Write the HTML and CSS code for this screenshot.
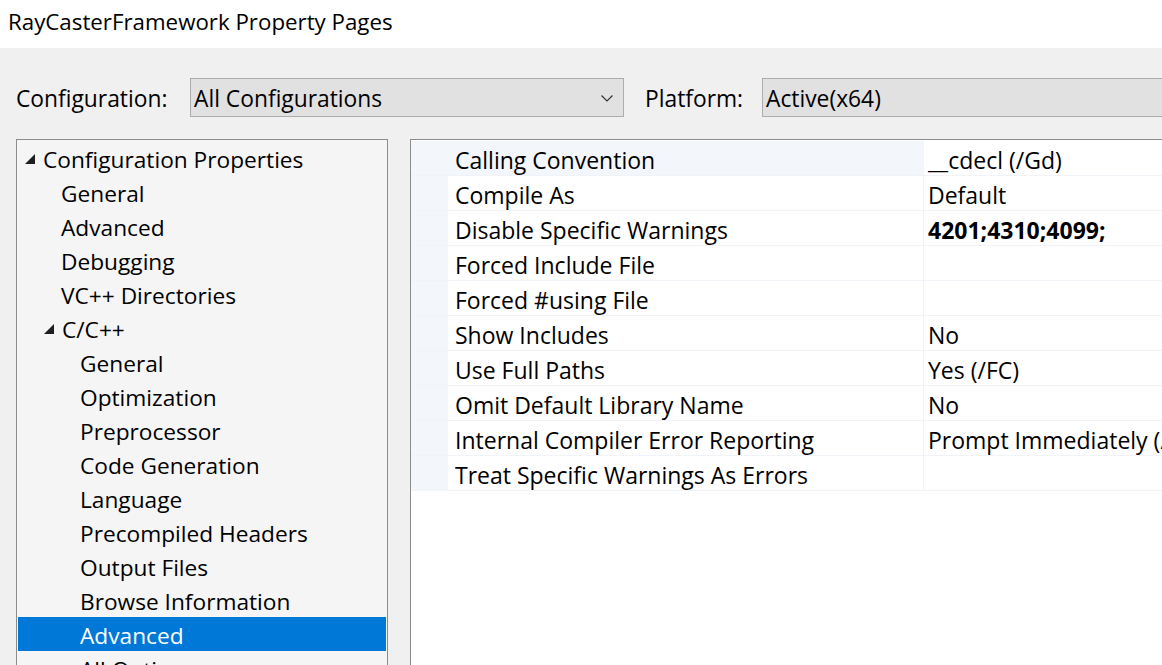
FILE: index.html
```html
<!DOCTYPE html>
<html>
<head>
<meta charset="utf-8">
<link rel="stylesheet" href="styles.css">
</head>
<body>
<div class="window">
  <div class="titlebar">RayCasterFramework Property Pages</div>
  <div class="configbar">
    <span class="label">Configuration:</span>
    <div class="combo combo-config">
      <span class="combo-text">All Configurations</span>
      <svg class="chevron" width="12" height="7" viewBox="0 0 12 7"><polyline points="0.5,0.5 6,6 11.5,0.5" fill="none" stroke="#333" stroke-width="1.2"/></svg>
    </div>
    <span class="label label-platform">Platform:</span>
    <div class="combo combo-platform">
      <span class="combo-text">Active(x64)</span>
    </div>
  </div>
  <div class="main">
    <div class="tree">
      <div class="node lvl0"><svg class="tri" width="10" height="10" viewBox="0 0 10 10"><polygon points="10,0 10,10 0,10" fill="#1e1e1e"/></svg>Configuration Properties</div>
      <div class="node lvl1">General</div>
      <div class="node lvl1">Advanced</div>
      <div class="node lvl1">Debugging</div>
      <div class="node lvl1">VC++ Directories</div>
      <div class="node lvl1 exp"><svg class="tri" width="10" height="10" viewBox="0 0 10 10"><polygon points="10,0 10,10 0,10" fill="#1e1e1e"/></svg>C/C++</div>
      <div class="node lvl2">General</div>
      <div class="node lvl2">Optimization</div>
      <div class="node lvl2">Preprocessor</div>
      <div class="node lvl2">Code Generation</div>
      <div class="node lvl2">Language</div>
      <div class="node lvl2">Precompiled Headers</div>
      <div class="node lvl2">Output Files</div>
      <div class="node lvl2">Browse Information</div>
      <div class="node lvl2 selected">Advanced</div>
      <div class="node lvl2">All Options</div>
    </div>
    <div class="grid">
      <div class="grid-rows">
        <div class="row first"><div class="gutter"></div><div class="name">Calling Convention</div><div class="value">__cdecl (/Gd)</div></div>
        <div class="row"><div class="gutter"></div><div class="name">Compile As</div><div class="value">Default</div></div>
        <div class="row"><div class="gutter"></div><div class="name">Disable Specific Warnings</div><div class="value bold">4201;4310;4099;</div></div>
        <div class="row"><div class="gutter"></div><div class="name">Forced Include File</div><div class="value"></div></div>
        <div class="row"><div class="gutter"></div><div class="name">Forced #using File</div><div class="value"></div></div>
        <div class="row"><div class="gutter"></div><div class="name">Show Includes</div><div class="value">No</div></div>
        <div class="row"><div class="gutter"></div><div class="name">Use Full Paths</div><div class="value">Yes (/FC)</div></div>
        <div class="row"><div class="gutter"></div><div class="name">Omit Default Library Name</div><div class="value">No</div></div>
        <div class="row"><div class="gutter"></div><div class="name">Internal Compiler Error Reporting</div><div class="value">Prompt Immediately (/errorReport:prompt)</div></div>
        <div class="row"><div class="gutter"></div><div class="name">Treat Specific Warnings As Errors</div><div class="value"></div></div>
      </div>
    </div>
  </div>
</div>
</body>
</html>
```

FILE: styles.css
```css
* { box-sizing: border-box; }
html, body {
  margin: 0;
  padding: 0;
  width: 1162px;
  height: 665px;
  overflow: hidden;
  background: #f0f0f0;
  font-family: "Open Sans", "Noto Sans", sans-serif;
  color: #000;
}
.window {
  width: 1162px;
  height: 665px;
  overflow: hidden;
  display: flex;
  flex-direction: column;
}
.titlebar {
  height: 48px;
  flex-shrink: 0;
  background: #fff;
  padding-left: 8px;
  font-size: 22.3px;
  line-height: 44px;
  white-space: nowrap;
}
.configbar {
  display: flex;
  align-items: center;
  padding: 30px 0 0 16px;
  height: 69px;
  flex-shrink: 0;
  font-size: 22.8px;
  white-space: nowrap;
}
.label { width: 174px; flex-shrink: 0; padding-top: 2px; }
.label-platform { padding-left: 21px; width: 138px; }
.combo {
  height: 39px;
  background: #e1e1e1;
  border: 1px solid #adadad;
  display: flex;
  align-items: center;
  padding-left: 3px;
  flex-shrink: 0;
}
.combo-text { padding-top: 2px; }
.combo-config { width: 434px; justify-content: space-between; padding-right: 10px; }
.combo-platform { width: 420px; }
.chevron { display: block; margin-top: 1px; }
.main {
  display: flex;
  gap: 22px;
  padding: 22px 0 0 16px;
  flex: 1;
  min-height: 0;
}
.tree {
  width: 372px;
  flex-shrink: 0;
  background: #f5f5f5;
  border: 1px solid #8c8c8c;
  border-bottom: none;
  padding: 1px;
  font-size: 22.7px;
  overflow: hidden;
}
.node {
  height: 34px;
  padding-top: 4px;
  line-height: 30px;
  white-space: nowrap;
  display: flex;
  align-items: center;
}
.lvl0 { padding-left: 7px; }
.lvl1 { padding-left: 43px; }
.lvl2 { padding-left: 62px; }
.lvl1.exp { padding-left: 26px; }
.tri { margin-right: 8px; margin-top: -2px; flex-shrink: 0; }
.selected { background: #0078d7; color: #fff; }
.grid {
  width: 780px;
  flex-shrink: 0;
  background: #fff;
  border: 1px solid #8c8c8c;
  border-right: none;
  border-bottom: none;
  padding-top: 1px;
  font-size: 23px;
}
.row {
  display: flex;
  height: 35px;
  border-bottom: 1px solid #f0f3f8;
}
.gutter {
  width: 37px;
  background: #f3f6fb;
  flex-shrink: 0;
}
.name {
  width: 476px;
  flex-shrink: 0;
  padding-left: 7px;
  padding-top: 4px;
  line-height: 30px;
  border-right: 1px solid #f0f3f8;
  white-space: nowrap;
}
.row.first .name { background: #f3f6fb; }
.value {
  flex: 1;
  padding-left: 4px;
  padding-top: 4px;
  line-height: 30px;
  white-space: nowrap;
  overflow: hidden;
}
.bold { font-weight: 700; }
```
